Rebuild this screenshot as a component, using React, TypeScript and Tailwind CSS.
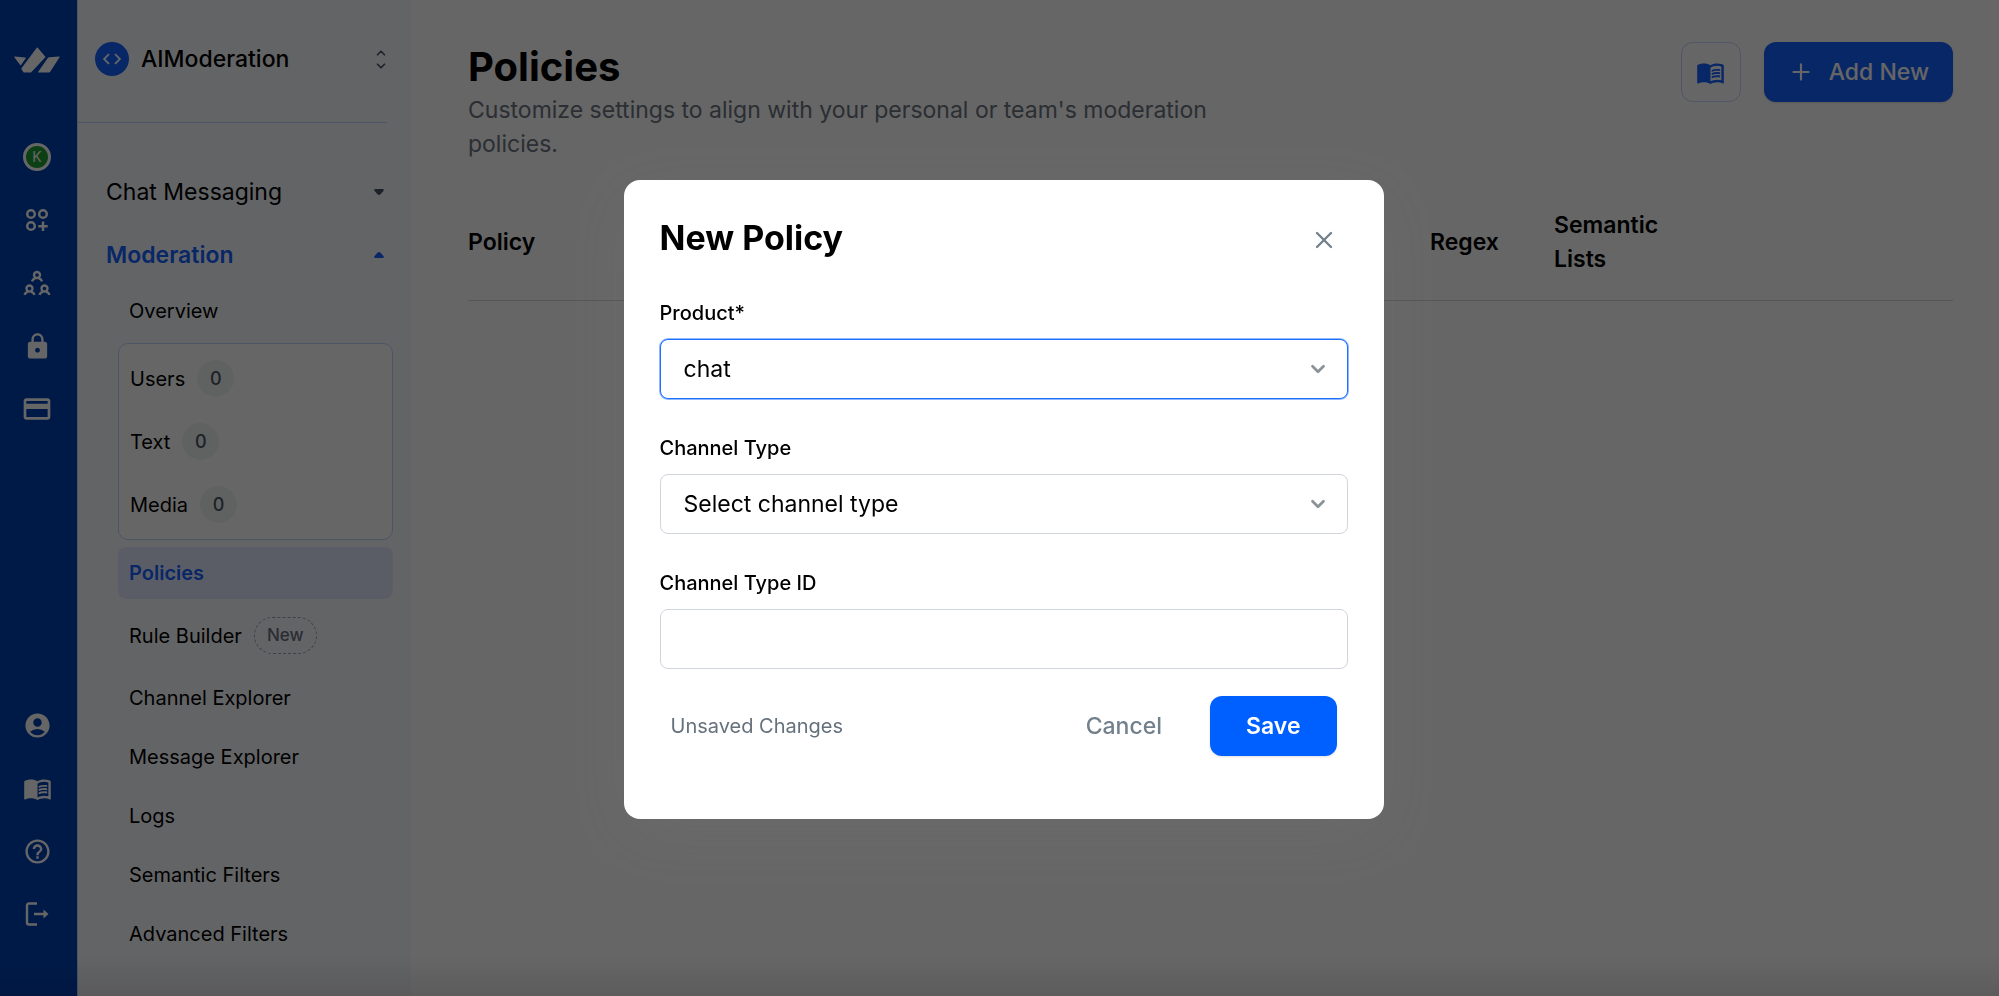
import { useState } from "react";
import type { ReactNode } from "react";
import { ChevronDown, ChevronUp, Plus, X } from "lucide-react";
import {
  MdAccountCircle,
  MdCode,
  MdCreditCard,
  MdHelpOutline,
  MdLock,
  MdMenuBook,
} from "react-icons/md";

type Item = { name: string; count?: number; tag?: string };

const queues: Item[] = [
  { name: "Users", count: 0 },
  { name: "Text", count: 0 },
  { name: "Media", count: 0 },
];

const tools: Item[] = [
  { name: "Channel Explorer" },
  { name: "Message Explorer" },
  { name: "Logs" },
  { name: "Semantic Filters" },
  { name: "Advanced Filters" },
];

export default function App() {
  const [open, setOpen] = useState(true);

  return (
    <div className="flex h-screen overflow-hidden bg-white font-['Inter',sans-serif] text-black">
      <Rail />
      <Sidebar />
      <Policies onAdd={() => setOpen(true)} />
      {open && <PolicyModal onClose={() => setOpen(false)} />}
    </div>
  );
}

function Rail() {
  return (
    <nav aria-label="Main" className="flex w-[78px] shrink-0 flex-col items-center border-r border-[#b8d4ff] bg-[#0043b5] pb-[68px] pr-[3px] pt-[47px] text-white">
      <a href="#home" aria-label="Home" className="mb-[70px]"><Logo /></a>
      <div className="flex flex-col items-center gap-[35px]">
        <RailLink label="Organization">
          <span className="grid size-7 place-items-center rounded-full border-[3px] border-white bg-[#1fa032] text-sm">K</span>
        </RailLink>
        <RailLink label="Apps"><AppsIcon /></RailLink>
        <RailLink label="Team"><TeamIcon /></RailLink>
        <RailLink label="Security"><MdLock size={29} /></RailLink>
        <RailLink label="Billing"><MdCreditCard size={32} /></RailLink>
      </div>
      <div className="mt-auto flex flex-col items-center gap-[35px]">
        <RailLink label="Account"><MdAccountCircle size={29} /></RailLink>
        <RailLink label="Docs"><MdMenuBook size={29} /></RailLink>
        <RailLink label="Help"><MdHelpOutline size={29} /></RailLink>
        <RailLink label="Log out"><LogoutIcon /></RailLink>
      </div>
    </nav>
  );
}

function RailLink({ label, children }: { label: string; children: ReactNode }) {
  return (
    <a href={`#${label.toLowerCase()}`} aria-label={label} className="flex h-7 w-8 items-center justify-center">
      {children}
    </a>
  );
}

function Sidebar() {
  return (
    <aside className="w-[333px] shrink-0 bg-[#f8faff]">
      <div className="mr-6 border-b border-[#b8d4ff] pb-[46px] pt-[42px]">
        <button className="flex w-full items-center pl-[17px] text-left">
          <span className="grid size-[34px] place-items-center rounded-full bg-[#1661ff] text-white"><MdCode size={22} /></span>
          <span className="ml-3 flex-1 text-[23px] font-medium leading-[34px]">AIModeration</span>
          <span className="-mr-px flex flex-col text-gray-600">
            <ChevronUp size={14} strokeWidth={3} className="-mb-px" />
            <ChevronDown size={14} strokeWidth={3} />
          </span>
        </button>
      </div>

      <div className="pl-7 pr-[27px] pt-[52px] text-[23px] leading-[34px]">
        <button className="flex w-full items-center justify-between">Chat Messaging <span className="text-gray-600"><Caret /></span></button>
        <button className="mt-[29px] flex w-full items-center justify-between font-semibold text-[#1661ff]">Moderation <span className="rotate-180"><Caret /></span></button>
      </div>

      <div className="mt-[9px] pl-10 pr-[18px] text-xl">
        <NavItem item={{ name: "Overview" }} />
        <div className="mt-[3px] rounded-[10px] border border-[#b8d4ff] bg-white py-[3px]">
          {queues.map((q) => <NavItem key={q.name} item={q} />)}
        </div>
        <a href="#policies" aria-current="page" className="mb-1 mt-[7px] flex h-[52px] items-center rounded-lg bg-[#e3e9ff] pl-[11px] font-semibold text-[#1661ff]">Policies</a>
        <NavItem item={{ name: "Rule Builder", tag: "New" }} />
        {tools.map((t) => <NavItem key={t.name} item={t} />)}
      </div>
    </aside>
  );
}

function NavItem({ item }: { item: Item }) {
  const height = item.tag !== undefined ? "h-[65px]" : item.count !== undefined ? "h-[63px]" : "h-[59px]";
  return (
    <a href={`#${item.name.toLowerCase().replace(" ", "-")}`} className={`flex items-center gap-3 pl-[11px] ${height}`}>
      {item.name}
      {item.count !== undefined && <span className="grid size-[37px] place-items-center rounded-full bg-[#f0f3f2] text-lg font-medium text-gray-600">{item.count}</span>}
      {item.tag && <span className="grid h-[37px] place-items-center rounded-full border border-dashed border-gray-400 px-3 text-[17px] font-medium text-gray-500">{item.tag}</span>}
    </a>
  );
}

function Policies({ onAdd }: { onAdd: () => void }) {
  return (
    <main className="min-w-0 flex-1 pl-[57px] pr-[46px] pt-[42px]">
      <div className="flex items-start justify-between">
        <div className="max-w-[760px]">
          <h1 className="text-[40px] font-bold leading-[49px]">Policies</h1>
          <p className="mt-[2px] text-[23px] leading-[34px] text-[#6b7480]">Customize settings to align with your personal or team's moderation policies.</p>
        </div>
        <div className="flex gap-[23px]">
          <a href="#docs" aria-label="Documentation" className="grid size-[60px] place-items-center rounded-xl border border-[#c8d6ff] text-[#1661ff]"><MdMenuBook size={29} /></a>
          <button onClick={onAdd} className="flex h-[60px] items-center gap-[15px] rounded-xl bg-[#1661ff] px-6 text-[23px] font-medium text-white shadow-sm">
            <Plus size={26} strokeWidth={2} /> Add New
          </button>
        </div>
      </div>

      <table className="mt-[47px] w-full table-fixed text-left text-[23px] leading-[34px]">
        <thead>
          <tr className="h-[92px] border-b border-gray-300 align-top">
            <th className="pt-[17px] font-semibold">Policy</th>
            <th className="w-[124px] pt-[17px] font-semibold">Regex</th>
            <th className="w-[140px] font-semibold">Semantic Lists</th>
            <th className="w-[259px]" aria-label="Actions" />
          </tr>
        </thead>
      </table>
    </main>
  );
}

const field = "h-[60px] w-full rounded-lg border bg-white px-[23px] text-[23px]";

function PolicyModal({ onClose }: { onClose: () => void }) {
  const [product, setProduct] = useState("chat");
  const [channelType, setChannelType] = useState("");
  const [typeId, setTypeId] = useState("");

  return (
    <div className="fixed inset-0 flex items-center justify-center bg-[linear-gradient(to_top,rgba(0,0,0,0.64),rgba(0,0,0,0.6)_40px)] pl-2 pt-[3px]">
      <form role="dialog" aria-labelledby="policy-title" onSubmit={(e) => e.preventDefault()} className="w-full max-w-[760px] rounded-2xl bg-white px-9 pb-[63px] pt-[34px] shadow-[0_16px_64px_rgba(128,128,128,0.12)]">
        <div className="flex items-center justify-between pr-[10px]">
          <h2 id="policy-title" className="text-[34px] font-bold leading-[48px]">New Policy</h2>
          <button type="button" onClick={onClose} aria-label="Close" className="pt-[3px] text-[#72808a]"><X size={28} strokeWidth={2} /></button>
        </div>

        <div className="mt-[37px] flex flex-col gap-[35px]">
          <Select id="product" label="Product*" value={product} onChange={setProduct} options={[["chat", "chat"], ["feeds", "feeds"]]} active />
          <Select id="channel-type" label="Channel Type" value={channelType} onChange={setChannelType} options={[["", "Select channel type"], ["messaging", "messaging"]]} />
          <div>
            <label htmlFor="type-id" className="mb-[11px] block text-xl font-medium leading-[29px]">Channel Type ID</label>
            <input id="type-id" value={typeId} onChange={(e) => setTypeId(e.target.value)} className={`${field} border-gray-300`} />
          </div>
        </div>

        <div className="mt-[27px] flex items-center px-[11px]">
          <span className="flex-1 text-xl text-[#65717c]">Unsaved Changes</span>
          <button type="button" onClick={onClose} className="mr-12 text-[23px] font-medium text-[#72808c]">Cancel</button>
          <button className="h-[60px] rounded-xl bg-[#005fff] px-9 text-[23px] font-semibold text-white shadow-sm">Save</button>
        </div>
      </form>
    </div>
  );
}

type SelectProps = { id: string; label: string; value: string; onChange: (v: string) => void; options: [string, string][]; active?: boolean };

function Select({ id, label, value, onChange, options, active }: SelectProps) {
  return (
    <div>
      <label htmlFor={id} className="mb-[11px] block text-xl font-medium leading-[29px]">{label}</label>
      <div className="relative">
        <select id={id} value={value} onChange={(e) => onChange(e.target.value)} className={`${field} appearance-none ${active ? "border-[#1f70ff] ring-1 ring-[#1f70ff]/50" : "border-gray-300"}`}>
          {options.map(([v, text]) => <option key={v} value={v}>{text}</option>)}
        </select>
        <ChevronDown size={22} strokeWidth={3} className="pointer-events-none absolute right-[19px] top-[19px] text-[#8a9399]" />
      </div>
    </div>
  );
}

function Caret() {
  return (
    <svg width="10" height="6" viewBox="0 0 10 6" fill="currentColor">
      <path d="M1 0h8q1 .3.800 1.500L6.500 5.300q-1.500 1.200-3 0L.2 1.500Q0 .3 1 0Z" />
    </svg>
  );
}

function Logo() {
  return (
    <svg width="46" height="26" viewBox="0 0 46 26" fill="currentColor">
      <path d="M.7 9.500 11 10.400q1.300.1.600 1.200L7.300 17.800q-.6.900-1.300 0L.3 10.300Q0 9.500.7 9.500Z" />
      <path d="M22.600.9q.7-.9 1.400 0l7.600 9.200L17.500 24.900q-.6.700-1.500.7H10.600q-.8 0-1.300-.7L7.600 22.500q-.5-.8.100-1.500Z" />
      <path d="M33.800 11q.6-.7 1.500-.8L45 9.400q1.100 0 .5.900L36.200 24.800q-.5.800-1.300.8H24.700q-1.200 0-.3-1Z" />
    </svg>
  );
}

function AppsIcon() {
  return (
    <svg width="24" height="24" viewBox="0 0 24 24" fill="none" stroke="currentColor" strokeWidth="2.500">
      <circle cx="6" cy="6" r="3.800" />
      <circle cx="18" cy="6" r="3.800" />
      <circle cx="6" cy="18" r="3.800" />
      <path d="M18 13.500v9.500M13.300 18.200h9.400" />
    </svg>
  );
}

function TeamIcon() {
  return (
    <svg width="28" height="26" viewBox="0 0 28 26" fill="none" stroke="currentColor" strokeWidth="2.400">
      {[[14, 5], [6.500, 18.500], [21.500, 18.500]].map(([x, y]) => (
        <g key={x} transform={`translate(${x} ${y})`}>
          <circle r="3" />
          <path d="M-5 6.300C-4.500 4.800-3.300 3.800-1.600 3.200M5 6.300C4.500 4.800 3.300 3.800 1.600 3.200" />
        </g>
      ))}
    </svg>
  );
}

function LogoutIcon() {
  return (
    <svg width="24" height="24" viewBox="0 0 24 24" fill="none" stroke="currentColor" strokeWidth="2.400">
      <path d="M12 1.500H4q-2 0-2 2v17q0 2 2 2h8M9 12h11" />
      <path d="m18.500 7.500 5 4.500-5 4.500Z" fill="currentColor" stroke="none" />
    </svg>
  );
}
